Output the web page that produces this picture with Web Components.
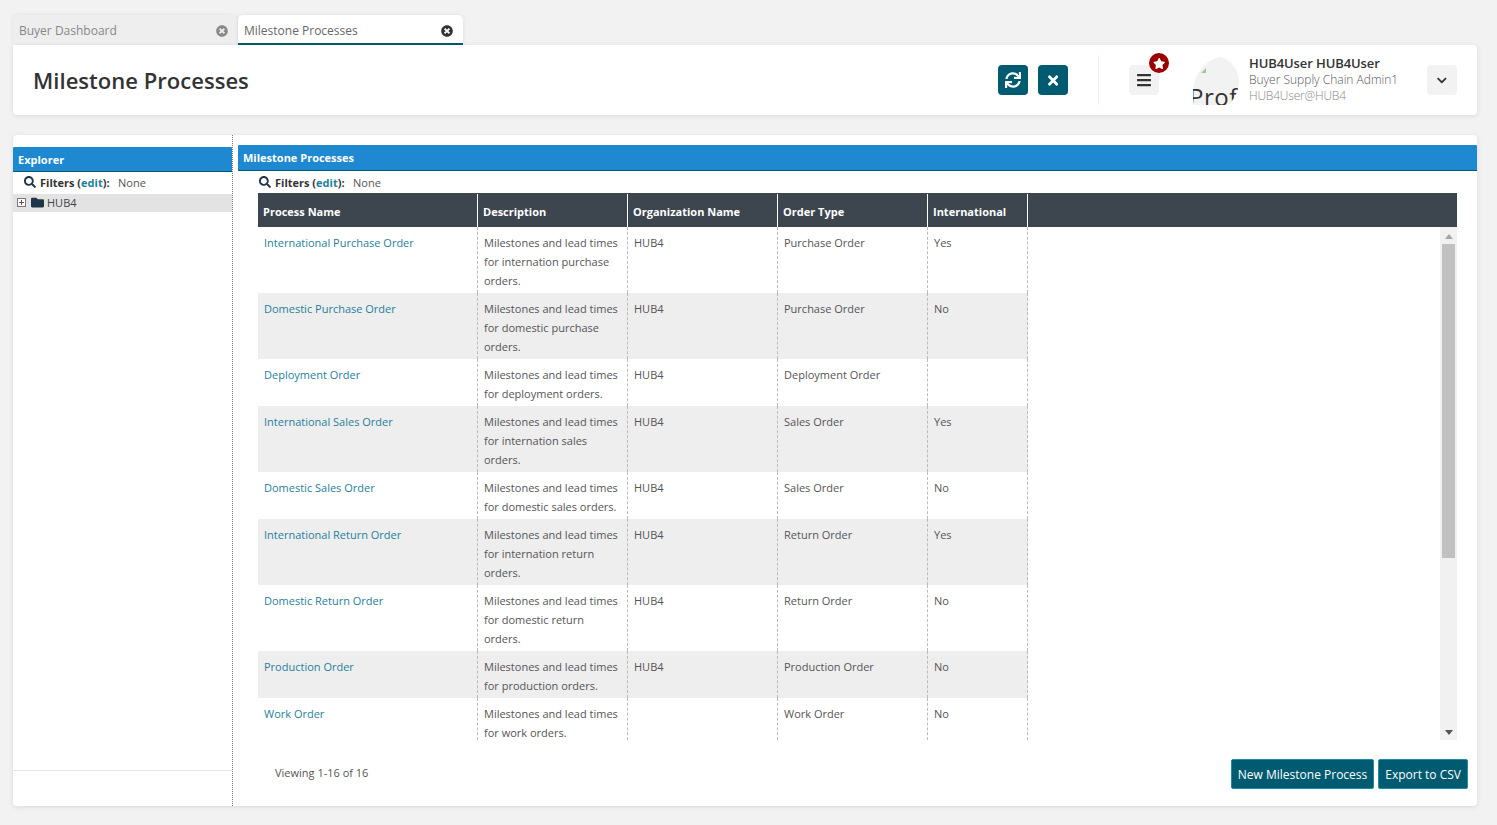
<!DOCTYPE html>
<html>
<head>
<meta charset="utf-8">
<title>Milestone Processes</title>
<style>
  html, body { margin: 0; height: 100%; }
  body { background: #f2f2f2; font-family: "Open Sans", sans-serif; font-size: 11px; color: #444; overflow: hidden; }
  #page { display: flex; flex-direction: column; height: 825px; box-sizing: border-box; padding: 15px 20px 19px 13px; }
</style>
</head>
<body>
<div id="page">
  <tab-strip>
    <app-tab>Buyer Dashboard</app-tab>
    <app-tab active>Milestone Processes</app-tab>
  </tab-strip>
  <page-header heading="Milestone Processes"></page-header>
  <main-card>
    <explorer-pane slot="left"></explorer-pane>
    <grid-pane slot="right" heading="Milestone Processes"></grid-pane>
  </main-card>
</div>

<script>
const ICONS = {
  search: ['0 0 512 512', 'M505 442.7L405.3 343c-4.5-4.5-10.6-7-17-7H372c27.6-35.3 44-79.7 44-128C416 93.1 322.9 0 208 0S0 93.1 0 208s93.1 208 208 208c48.3 0 92.7-16.4 128-44v16.3c0 6.4 2.5 12.5 7 17l99.7 99.7c9.4 9.4 24.6 9.4 33.9 0l28.3-28.3c9.4-9.4 9.4-24.6.1-34zM208 336c-70.7 0-128-57.2-128-128 0-70.7 57.2-128 128-128 70.7 0 128 57.2 128 128 0 70.7-57.2 128-128 128z'],
  sync: ['0 0 512 512', 'M440.65 12.57l4 82.77A247.16 247.16 0 0 0 255.83 8C134.73 8 33.91 94.92 12.29 209.82A12 12 0 0 0 24.09 224h49.05a12 12 0 0 0 11.67-9.26 175.91 175.91 0 0 1 317-56.94l-101.46-4.86a12 12 0 0 0-12.57 12v47.41a12 12 0 0 0 12 12H500a12 12 0 0 0 12-12V12a12 12 0 0 0-12-12h-47.37a12 12 0 0 0-11.98 12.57zM255.83 432a175.61 175.61 0 0 1-146-77.8l101.8 4.87a12 12 0 0 0 12.57-12v-47.4a12 12 0 0 0-12-12H12a12 12 0 0 0-12 12V500a12 12 0 0 0 12 12h47.35a12 12 0 0 0 12-12.6l-4.15-82.57A247.17 247.17 0 0 0 255.83 504c121.11 0 221.93-86.92 243.55-201.82a12 12 0 0 0-11.8-14.18h-49.05a12 12 0 0 0-11.67 9.26A175.86 175.86 0 0 1 255.83 432z'],
  times: ['0 0 352 512', 'M242.72 256l100.07-100.07c12.28-12.28 12.28-32.19 0-44.48l-22.24-22.24c-12.28-12.28-32.19-12.28-44.48 0L176 189.28 75.93 89.21c-12.28-12.28-32.19-12.28-44.48 0L9.21 111.45c-12.28 12.28-12.28 32.19 0 44.48L109.28 256 9.21 356.07c-12.28 12.28-12.28 32.19 0 44.48l22.24 22.24c12.28 12.28 32.2 12.28 44.48 0L176 322.72l100.07 100.07c12.28 12.28 32.2 12.28 44.48 0l22.24-22.24c12.28-12.28 12.28-32.19 0-44.48L242.72 256z'],
  star: ['0 0 576 512', 'M259.3 17.8L194 150.2 47.9 171.5c-26.2 3.8-36.7 36.1-17.7 54.6l105.7 103-25 145.5c-4.5 26.3 23.2 46 46.4 33.7L288 439.6l130.7 68.7c23.2 12.2 50.9-7.4 46.4-33.7l-25-145.5 105.7-103c19-18.5 8.5-50.8-17.7-54.6L382 150.2 316.7 17.8c-11.7-23.6-45.6-23.9-57.4 0z'],
  chevron: ['0 0 448 512', 'M207.029 381.476L12.686 187.132c-9.373-9.373-9.373-24.569 0-33.941l22.667-22.667c9.357-9.357 24.522-9.375 33.901-.04L224 284.505l154.745-154.021c9.379-9.335 24.544-9.317 33.901.04l22.667 22.667c9.373 9.373 9.373 24.569 0 33.941L240.971 381.476c-9.373 9.372-24.569 9.372-33.942 0z'],
  folder: ['0 0 512 512', 'M464 128H272l-64-64H48C21.49 64 0 85.49 0 112v288c0 26.51 21.49 48 48 48h416c26.51 0 48-21.49 48-48V176c0-26.51-21.49-48-48-48z'],
  close: ['0 0 512 512', 'M256 8C119 8 8 119 8 256s111 248 248 248 248-111 248-248S393 8 256 8zm121.6 313.1c4.7 4.7 4.7 12.3 0 17L338 377.6c-4.7 4.7-12.3 4.7-17 0L256 312l-65.1 65.6c-4.7 4.7-12.3 4.7-17 0L134.4 338c-4.7-4.7-4.7-12.3 0-17l65.6-65-65.6-65.1c-4.7-4.7-4.7-12.3 0-17l39.6-39.6c4.7-4.7 12.3-4.7 17 0l65 65.7 65.1-65.6c4.7-4.7 12.3-4.7 17 0l39.6 39.6c4.7 4.7 4.7 12.3 0 17L312 256l65.6 65.1z'],
  bars: ['0 0 448 512', 'M16 132h416c8.837 0 16-7.163 16-16V76c0-8.837-7.163-16-16-16H16C7.163 60 0 67.163 0 76v40c0 8.837 7.163 16 16 16zm0 160h416c8.837 0 16-7.163 16-16v-40c0-8.837-7.163-16-16-16H16c-8.837 0-16 7.163-16 16v40c0 8.837 7.163 16 16 16zm0 160h416c8.837 0 16-7.163 16-16v-40c0-8.837-7.163-16-16-16H16c-8.837 0-16 7.163-16 16v40c0 8.837 7.163 16 16 16z']
};

class AppIcon extends HTMLElement {
  connectedCallback() {
    const icon = ICONS[this.getAttribute('name')];
    const size = this.getAttribute('size') || '12';
    this.attachShadow({ mode: 'open' });
    this.shadowRoot.innerHTML = `
      <style>
        :host { display: inline-flex; align-items: center; justify-content: center; line-height: 0; }
        svg { height: ${size}px; width: auto; fill: currentColor; display: block; }
      </style>
      <svg viewBox="${icon[0]}"><path d="${icon[1]}"></path></svg>`;
  }
}
customElements.define('app-icon', AppIcon);

class TabStrip extends HTMLElement {
  constructor() {
    super();
    this.attachShadow({ mode: 'open' });
    this.shadowRoot.innerHTML = `
      <style>
        :host { display: flex; gap: 1px; height: 30px; flex: none; }
      </style>
      <slot></slot>`;
  }
}
customElements.define('tab-strip', TabStrip);

class AppTab extends HTMLElement {
  constructor() {
    super();
    this.attachShadow({ mode: 'open' });
    this.shadowRoot.innerHTML = `
      <style>
        :host {
          display: flex; align-items: center; justify-content: space-between;
          box-sizing: border-box; width: 224px; height: 30px; padding: 1px 9px 0 6px;
          background: #eeeeee; color: #888; font-size: 12px;
          border-radius: 5px 5px 0 0; box-shadow: 0 0 4px rgba(0,0,0,.08);
        }
        :host([active]) {
          width: 225px; background: #fff; color: #666; border-bottom: 2px solid #005a70; padding: 3px 10px 0 6px;
        }
        app-icon { color: #888; }
        :host([active]) app-icon { color: #333; }
      </style>
      <span><slot></slot></span>
      <app-icon name="close" size="12"></app-icon>`;
  }
}
customElements.define('app-tab', AppTab);

class SquareButton extends HTMLElement {
  constructor() {
    super();
    this.attachShadow({ mode: 'open' });
    this.shadowRoot.innerHTML = `
      <style>
        :host {
          display: flex; align-items: center; justify-content: center; position: relative;
          width: 30px; height: 30px; border-radius: 4px; background: #005a70; color: #fff;
        }
        :host([light]) { background: #f2f2f2; color: #333; }
      </style>
      <slot></slot>`;
  }
}
customElements.define('square-button', SquareButton);

class PageHeader extends HTMLElement {
  connectedCallback() {
    this.attachShadow({ mode: 'open' });
    this.shadowRoot.innerHTML = `
      <style>
        :host {
          display: flex; align-items: center; flex: none; height: 70px; background: #fff;
          border-radius: 0 4px 4px 4px; box-shadow: 0 1px 5px rgba(0,0,0,.1);
          padding: 0 20px; box-sizing: border-box; position: relative;
        }
        h1 { margin: 0; flex: 1; font-size: 22px; font-weight: 600; color: #333; line-height: 30px; letter-spacing: .03px; }
        .actions { display: flex; gap: 10px; }
        .sep { width: 1px; height: 50px; background: #efefef; margin: 0 30px; }
        .badge {
          position: absolute; top: -12px; right: -10px; width: 20px; height: 20px; border-radius: 50%;
          background: #9b0000; color: #fff; display: flex; align-items: center; justify-content: center;
        }
        .avatar {
          width: 46px; height: 48px; margin: 2px 10px 0 34px; background: #f2f2f2; overflow: hidden;
          clip-path: path('M27 0 C38 2 46 14 46 24 C46 34 41 43 35 48 L1 48 C-1 40 -1 34 1 26 C4 14 15 2 27 0Z');
          position: relative; display: flex; align-items: flex-end; color: #333;
        }
        .avatar span { font-size: 24px; line-height: 24px; letter-spacing: .5px; margin: 0 0 -4px -4px; white-space: nowrap; }
        .avatar i { position: absolute; left: 8px; top: 11px; width: 0; height: 0; border-left: 5px solid transparent; border-bottom: 5px solid #a9c2a0; }
        .who { width: 178px; font-size: 12px; line-height: 16px; color: #555; font-weight: 300; }
        .who b { display: block; color: #333; font-size: 13px; font-weight: 600; letter-spacing: -.1px; margin: -1px 0 1px; }
        .who small { display: block; font-size: 12px; color: #888; letter-spacing: -.2px; }
      </style>
      <h1>${this.getAttribute('heading')}</h1>
      <div class="actions">
        <square-button><app-icon name="sync" size="16"></app-icon></square-button>
        <square-button><app-icon name="times" size="15"></app-icon></square-button>
      </div>
      <div class="sep"></div>
      <square-button light>
        <app-icon name="bars" size="16"></app-icon>
        <div class="badge"><app-icon name="star" size="11"></app-icon></div>
      </square-button>
      <div class="avatar"><i></i><span>Prof</span></div>
      <div class="who">
        <b>HUB4User HUB4User</b>
        <span>Buyer Supply Chain Admin1</span>
        <small>HUB4User@HUB4</small>
      </div>
      <square-button light><app-icon name="chevron" size="11"></app-icon></square-button>`;
  }
}
customElements.define('page-header', PageHeader);

class MainCard extends HTMLElement {
  constructor() {
    super();
    this.attachShadow({ mode: 'open' });
    this.shadowRoot.innerHTML = `
      <style>
        :host {
          display: flex; flex: 1; min-height: 0; margin-top: 20px; background: #fff;
          border-radius: 4px; box-shadow: 0 1px 5px rgba(0,0,0,.1); overflow: hidden;
        }
        .left { display: flex; width: 220px; flex: none; box-sizing: border-box; border-right: 1px dotted #777; }
        .right { display: flex; flex: 1; min-width: 0; }
        ::slotted(*) { flex: 1; min-width: 0; }
      </style>
      <div class="left"><slot name="left"></slot></div>
      <div class="right"><slot name="right"></slot></div>`;
  }
}
customElements.define('main-card', MainCard);

class PaneTitle extends HTMLElement {
  constructor() {
    super();
    this.attachShadow({ mode: 'open' });
    this.shadowRoot.innerHTML = `
      <style>
        :host {
          display: flex; align-items: center; flex: none; box-sizing: border-box; height: 25px; padding: 0 5px;
          background: #1e88d0; border-bottom: 1px solid #005a70; color: #fff;
          font-size: 11px; font-weight: 700; border-radius: 1px 1px 0 0;
        }
      </style>
      <slot></slot>`;
  }
}
customElements.define('pane-title', PaneTitle);

class FilterLine extends HTMLElement {
  constructor() {
    super();
    this.attachShadow({ mode: 'open' });
    this.shadowRoot.innerHTML = `
      <style>
        :host { display: flex; align-items: center; flex: none; box-sizing: border-box; height: 22px; font-size: 11px; color: #555; }
        app-icon { color: #1f3649; margin-right: 4px; }
        b { font-weight: 700; color: #333; margin-right: 8.5px; }
        a { color: #1f7f9c; }
      </style>
      <app-icon name="search" size="12"></app-icon>
      <b>Filters (<a>edit</a>):</b> None`;
  }
}
customElements.define('filter-line', FilterLine);

class ExplorerPane extends HTMLElement {
  constructor() {
    super();
    this.attachShadow({ mode: 'open' });
    this.shadowRoot.innerHTML = `
      <style>
        :host { display: flex; flex-direction: column; padding-top: 12px; box-sizing: border-box; }
        filter-line { padding: 0 0 2px 11px; }
        .node { display: flex; align-items: center; box-sizing: border-box; height: 18px; background: #e3e3e3; padding: 0 0 2px 4px; color: #444; }
        .plus { width: 9px; height: 9px; border: 1px solid #777; box-sizing: border-box; position: relative; margin-right: 5px; background: #fff; }
        .plus::before { content: ""; position: absolute; left: 1px; right: 1px; top: 3px; height: 1px; background: #555; }
        .plus::after { content: ""; position: absolute; top: 1px; bottom: 1px; left: 3px; width: 1px; background: #555; }
        app-icon { color: #1f3649; margin-right: 3px; }
        .fill { flex: 1; }
        .foot { height: 35px; border-top: 1px solid #e6e6e6; flex: none; }
      </style>
      <pane-title>Explorer</pane-title>
      <filter-line></filter-line>
      <div class="node"><span class="plus"></span><app-icon name="folder" size="13"></app-icon>HUB4</div>
      <div class="fill"></div>
      <div class="foot"></div>`;
  }
}
customElements.define('explorer-pane', ExplorerPane);

const ROWS = [
  ['International Purchase Order', 'Milestones and lead times for internation purchase orders.', 'HUB4', 'Purchase Order', 'Yes'],
  ['Domestic Purchase Order', 'Milestones and lead times for domestic purchase orders.', 'HUB4', 'Purchase Order', 'No'],
  ['Deployment Order', 'Milestones and lead times for deployment orders.', 'HUB4', 'Deployment Order', ''],
  ['International Sales Order', 'Milestones and lead times for internation sales orders.', 'HUB4', 'Sales Order', 'Yes'],
  ['Domestic Sales Order', 'Milestones and lead times for domestic sales orders.', 'HUB4', 'Sales Order', 'No'],
  ['International Return Order', 'Milestones and lead times for internation return orders.', 'HUB4', 'Return Order', 'Yes'],
  ['Domestic Return Order', 'Milestones and lead times for domestic return orders.', 'HUB4', 'Return Order', 'No'],
  ['Production Order', 'Milestones and lead times for production orders.', 'HUB4', 'Production Order', 'No'],
  ['Work Order', 'Milestones and lead times for work orders.', '', 'Work Order', 'No']
];

class DataGrid extends HTMLElement {
  connectedCallback() {
    this.attachShadow({ mode: 'open' });
    const heads = ['Process Name', 'Description', 'Organization Name', 'Order Type', 'International'];
    this.shadowRoot.innerHTML = `
      <style>
        :host { display: flex; flex-direction: column; flex: 1; min-height: 0; --cols: 220px 150px 150px 150px 100px; }
        .head { display: grid; grid-template-columns: var(--cols) 1fr; height: 34px; flex: none; background: #3d454f; color: #fff; font-weight: 700; padding-top: 1px; box-sizing: border-box; }
        .head div { display: flex; align-items: center; padding: 2px 5px 0; border-right: 1px solid #fff; box-sizing: border-box; }
        .head div:last-child { border: 0; }
        .body { display: flex; flex: 1; min-height: 0; }
        .rows { flex: 1; min-width: 0; overflow: hidden; }
        .row { display: grid; grid-template-columns: var(--cols); width: 770px; line-height: 19px; }
        .row:nth-child(even) { background: #eeeeee; }
        .row div { padding: 6px 6px 3px; border-right: 1px dashed #bbb; box-sizing: border-box; color: #555; }
        .row a { color: #1f7f9c; }
        .bar { width: 17px; flex: none; background: #f1f1f1; display: flex; flex-direction: column; align-items: center; box-sizing: border-box; padding-top: 7px; }
        .up { border: 4px solid transparent; border-top: 0; border-bottom: 5px solid #a5a5a5; }
        .thumb { width: 13px; height: 314px; background: #c1c1c1; margin-top: 5px; flex: none; }
        .gap { flex: 1; }
        .down { border: 4px solid transparent; border-bottom: 0; border-top: 5px solid #555; margin-bottom: 5px; }
      </style>
      <div class="head">${heads.map(h => `<div>${h}</div>`).join('')}<div></div></div>
      <div class="body">
        <div class="rows">
          ${ROWS.map(r => `<div class="row">
            <div><a>${r[0]}</a></div>
            <div>${r[1]}</div>
            <div>${r[2]}</div>
            <div>${r[3]}</div>
            <div>${r[4]}</div>
          </div>`).join('')}
        </div>
        <div class="bar"><span class="up"></span><span class="thumb"></span><span class="gap"></span><span class="down"></span></div>
      </div>`;
  }
}
customElements.define('data-grid', DataGrid);

class ActionButton extends HTMLElement {
  constructor() {
    super();
    this.attachShadow({ mode: 'open' });
    this.shadowRoot.innerHTML = `
      <style>
        :host {
          display: flex; align-items: center; box-sizing: border-box; height: 30px; padding: 0 6px;
          background: #005a70; border: 1px solid #1d8cab; border-radius: 2px; color: #fff; font-size: 12px;
        }
      </style>
      <slot></slot>`;
  }
}
customElements.define('action-button', ActionButton);

class GridPane extends HTMLElement {
  connectedCallback() {
    this.attachShadow({ mode: 'open' });
    this.shadowRoot.innerHTML = `
      <style>
        :host { display: flex; flex-direction: column; padding: 10px 0 0 5px; box-sizing: border-box; min-height: 0; }
        pane-title { height: 26px; }
        .inner { display: flex; flex-direction: column; flex: 1; min-height: 0; padding: 0 20px; }
        filter-line { padding-left: 1px; }
        .foot { display: flex; align-items: center; justify-content: space-between; flex: none; height: 66px; margin-right: -11px; padding: 0 0 0 17px; }
        .foot span { position: relative; top: -1px; color: #555; }
        .btns { display: flex; gap: 4px; position: relative; top: 1px; }
      </style>
      <pane-title>${this.getAttribute('heading')}</pane-title>
      <div class="inner">
        <filter-line></filter-line>
        <data-grid></data-grid>
        <div class="foot">
          <span>Viewing 1-16 of 16</span>
          <div class="btns">
            <action-button>New Milestone Process</action-button>
            <action-button>Export to CSV</action-button>
          </div>
        </div>
      </div>`;
  }
}
customElements.define('grid-pane', GridPane);
</script>
</body>
</html>
